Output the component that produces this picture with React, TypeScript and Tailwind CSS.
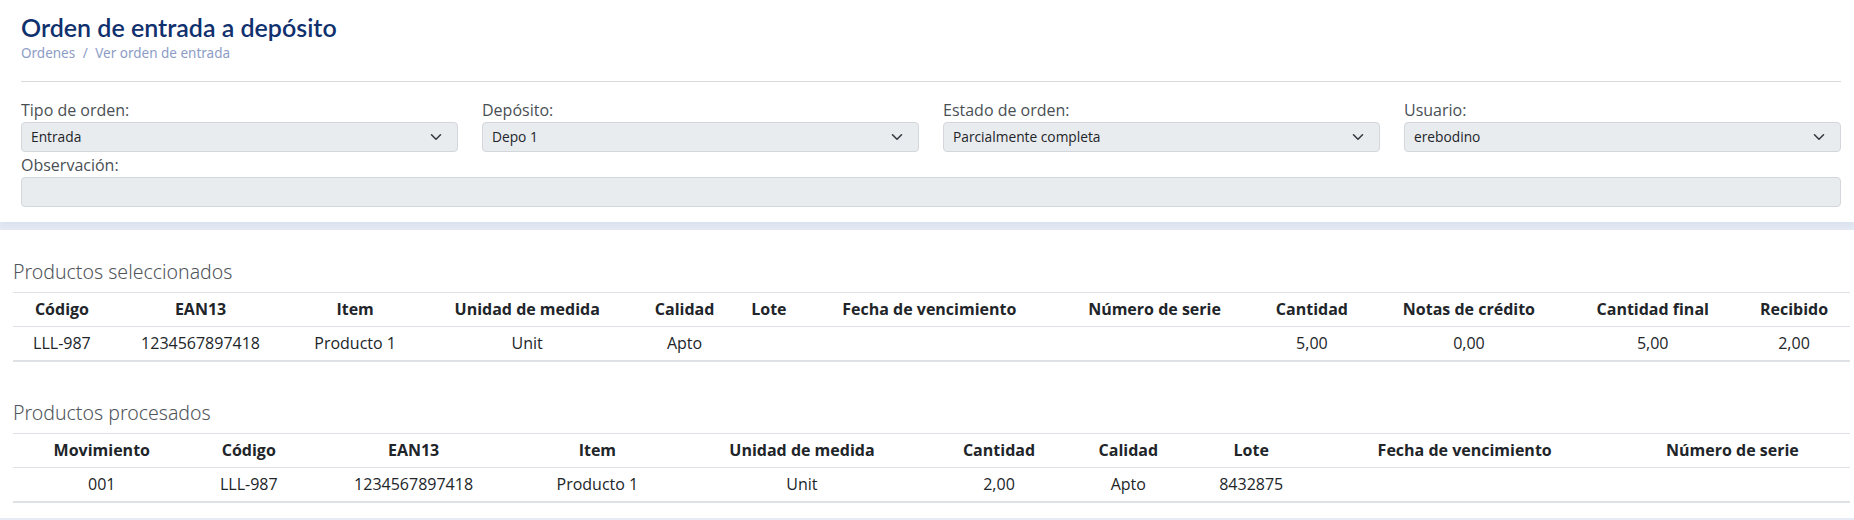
import React from 'react';

type Row = Record<string, string>;

const selectedCols = [
  'Código',
  'EAN13',
  'Item',
  'Unidad de medida',
  'Calidad',
  'Lote',
  'Fecha de vencimiento',
  'Número de serie',
  'Cantidad',
  'Notas de crédito',
  'Cantidad final',
  'Recibido',
];

const selectedRows: Row[] = [
  {
    'Código': 'LLL-987',
    EAN13: '1234567897418',
    Item: 'Producto 1',
    'Unidad de medida': 'Unit',
    Calidad: 'Apto',
    Lote: '',
    'Fecha de vencimiento': '',
    'Número de serie': '',
    Cantidad: '5,00',
    'Notas de crédito': '0,00',
    'Cantidad final': '5,00',
    Recibido: '2,00',
  },
];

const processedCols = [
  'Movimiento',
  'Código',
  'EAN13',
  'Item',
  'Unidad de medida',
  'Cantidad',
  'Calidad',
  'Lote',
  'Fecha de vencimiento',
  'Número de serie',
];

const processedRows: Row[] = [
  {
    Movimiento: '001',
    'Código': 'LLL-987',
    EAN13: '1234567897418',
    Item: 'Producto 1',
    'Unidad de medida': 'Unit',
    Cantidad: '2,00',
    Calidad: 'Apto',
    Lote: '8432875',
    'Fecha de vencimiento': '',
    'Número de serie': '',
  },
];

function Chevron() {
  return (
    <svg width="12" height="8" viewBox="0 0 12 8" fill="none" className="shrink-0">
      <path d="M1.5 1.8 6 6.2l4.5-4.4" stroke="#343a40" strokeWidth="1.6" strokeLinecap="round" strokeLinejoin="round" />
    </svg>
  );
}

function SelectField({ label, value }: { label: string; value: string }) {
  return (
    <div className="flex flex-col">
      <label className="text-[16px] leading-[24px] text-[#4a4f55]">{label}</label>
      <div className="flex h-[30px] items-center justify-between rounded-[4px] border border-[#d3d7dc] bg-[#e9ecef] pl-[9px] pr-[15px]">
        <span className="text-[13.75px] text-[#212529]">{value}</span>
        <Chevron />
      </div>
    </div>
  );
}

function DataTable({ title, cols, rows }: { title: string; cols: string[]; rows: Row[] }) {
  return (
    <div>
      <h2 className="mb-[6px] text-[19.5px] leading-[29px] font-light text-[#50555b] [font-family:'Noto_Sans',sans-serif]">
        {title}
      </h2>
      <table className="w-full border-collapse text-center text-[16px] text-[#212529]">
        <thead>
          <tr className="border-t border-b border-[#dee2e6]">
            {cols.map((c) => (
              <th key={c} className="px-[8px] py-[4px] leading-[25px] font-bold whitespace-nowrap">
                {c}
              </th>
            ))}
          </tr>
        </thead>
        <tbody>
          {rows.map((r, i) => (
            <tr key={i} className="border-b-2 border-[#dee2e6]">
              {cols.map((c) => (
                <td key={c} className="px-[8px] py-[4px] leading-[25px] whitespace-nowrap">
                  {r[c]}
                </td>
              ))}
            </tr>
          ))}
        </tbody>
      </table>
    </div>
  );
}

export default function App() {
  return (
    <div className="min-h-[520px] bg-[#e6ebf5] [font-family:'Open_Sans',sans-serif]">
      {/* Order header card */}
      <div className="bg-white pt-[12px] pb-[15px] pl-[21px] pr-[13px] shadow-[0_4px_8px_rgba(200,210,230,0.45)]">
        <h1 className="text-[25px] leading-[31px] font-semibold text-[#10306e] [font-family:Lato,sans-serif]">
          Orden de entrada a depósito
        </h1>
        <div className="mt-px text-[13.5px] leading-[18px] text-[#8c9cc6] [font-family:'Noto_Sans',sans-serif]">
          Ordenes <span className="mx-[4px]">/</span> Ver orden de entrada
        </div>
        <hr className="mt-[19px] mb-[16px] border-t border-[#d7d9dc]" />
        <div className="grid grid-cols-4 gap-x-[24px]">
          <SelectField label="Tipo de orden:" value="Entrada" />
          <SelectField label="Depósito:" value="Depo 1" />
          <SelectField label="Estado de orden:" value="Parcialmente completa" />
          <SelectField label="Usuario:" value="erebodino" />
        </div>
        <div className="mt-px flex flex-col">
          <label className="text-[16px] leading-[24px] text-[#4a4f55]">Observación:</label>
          <div className="h-[30px] rounded-[4px] border border-[#d3d7dc] bg-[#e9ecef]" />
        </div>
      </div>

      {/* Products card */}
      <div className="mt-[8px] flex flex-col gap-[36px] bg-white pt-[27px] pb-[15px] pl-[13px] pr-[4px]">
        <DataTable title="Productos seleccionados" cols={selectedCols} rows={selectedRows} />
        <DataTable title="Productos procesados" cols={processedCols} rows={processedRows} />
      </div>
    </div>
  );
}
